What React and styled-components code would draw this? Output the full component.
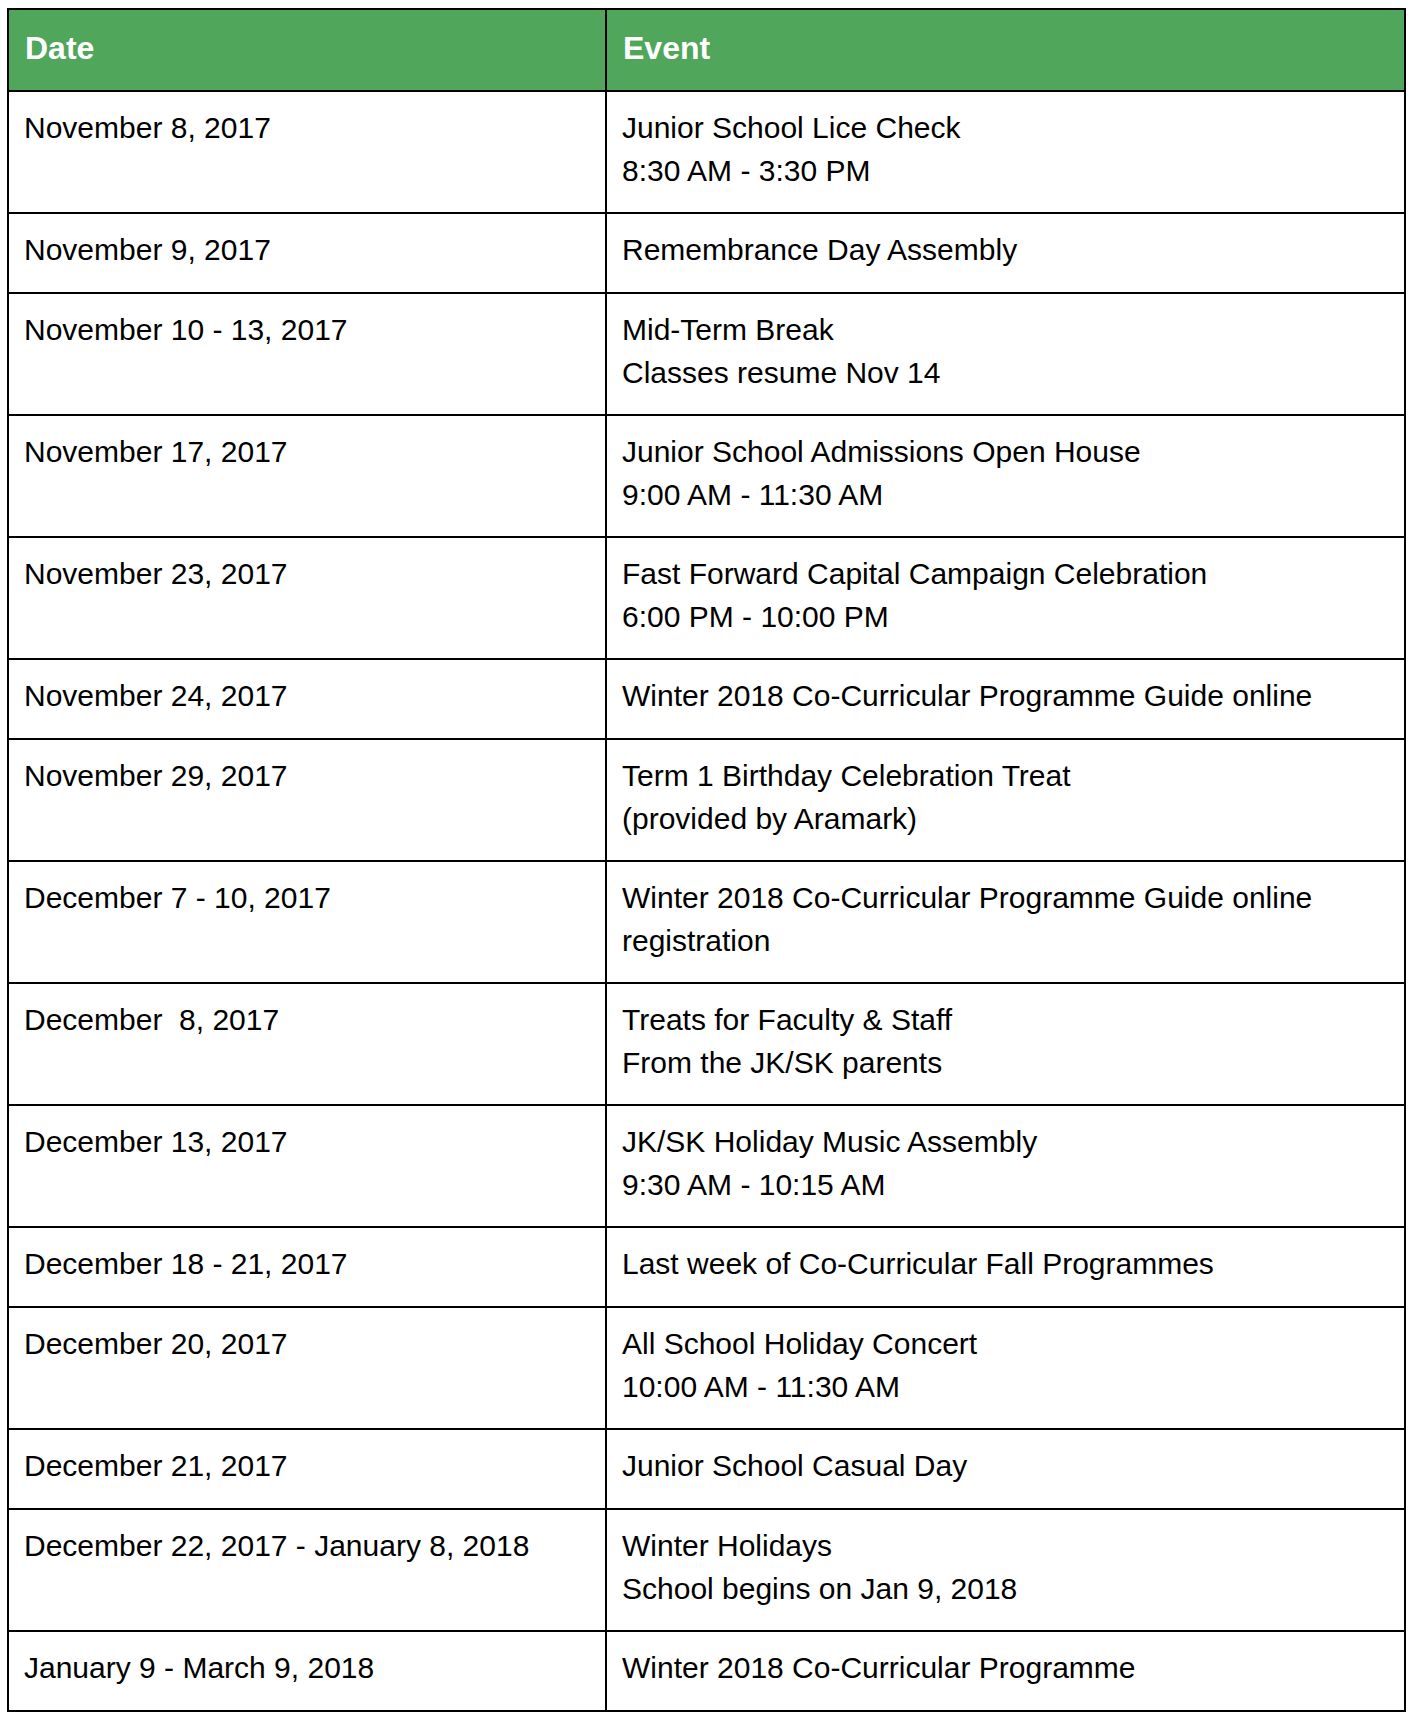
import React from "react";
import styled, { createGlobalStyle } from "styled-components";

const GlobalStyle = createGlobalStyle`
    html, body {
        margin: 0;
        padding: 0;
        background: #ffffff;
    }
    body {
        font-family: "Liberation Sans", Arial, Helvetica, sans-serif;
        color: #000000;
    }
`;

const Page = styled.div`
    padding: 8px 0 0 7px;
`;

const ScheduleTable = styled.table`
    width: 1399px;
    border-collapse: separate;
    border-spacing: 0;
    border-top: 2px solid #000;
    border-left: 2px solid #000;
    table-layout: fixed;
    font-family: "Liberation Sans", Arial, Helvetica, sans-serif;
    color: #000000;
`;

const HeadCell = styled.th`
    width: ${({ $width }) => $width || "auto"};
    background-color: #50a65a;
    color: #ffffff;
    font-family: "Liberation Sans", Arial, Helvetica, sans-serif;
    font-size: 32px;
    font-weight: 700;
    line-height: 44px;
    text-align: left;
    padding: 16px 14px 20px 16px;
    border-right: 2px solid #000;
    border-bottom: 2px solid #000;
`;

// two-line rows sit a little tighter at the bottom than one-line rows
const BodyCell = styled.td`
    vertical-align: top;
    font-family: "Liberation Sans", Arial, Helvetica, sans-serif;
    font-size: 30px;
    line-height: 43px;
    padding: 14px 14px ${({ $multi }) => ($multi ? "20px" : "21px")} 15px;
    border-right: 2px solid #000;
    border-bottom: 2px solid #000;
    white-space: pre-wrap;
`;

const Line = styled.div`
    display: block;
`;

const events = [
    { date: "November 8, 2017", lines: ["Junior School Lice Check", "8:30 AM - 3:30 PM"] },
    { date: "November 9, 2017", lines: ["Remembrance Day Assembly"] },
    { date: "November 10 - 13, 2017", lines: ["Mid-Term Break", "Classes resume Nov 14"] },
    { date: "November 17, 2017", lines: ["Junior School Admissions Open House", "9:00 AM - 11:30 AM"] },
    { date: "November 23, 2017", lines: ["Fast Forward Capital Campaign Celebration", "6:00 PM - 10:00 PM"] },
    { date: "November 24, 2017", lines: ["Winter 2018 Co-Curricular Programme Guide online"] },
    { date: "November 29, 2017", lines: ["Term 1 Birthday Celebration Treat", "(provided by Aramark)"] },
    { date: "December 7 - 10, 2017", lines: ["Winter 2018 Co-Curricular Programme Guide online", "registration"] },
    { date: "December  8, 2017", lines: ["Treats for Faculty & Staff", "From the JK/SK parents"] },
    { date: "December 13, 2017", lines: ["JK/SK Holiday Music Assembly", "9:30 AM - 10:15 AM"] },
    { date: "December 18 - 21, 2017", lines: ["Last week of Co-Curricular Fall Programmes"] },
    { date: "December 20, 2017", lines: ["All School Holiday Concert", "10:00 AM - 11:30 AM"] },
    { date: "December 21, 2017", lines: ["Junior School Casual Day"] },
    { date: "December 22, 2017 - January 8, 2018", lines: ["Winter Holidays", "School begins on Jan 9, 2018"] },
    { date: "January 9 - March 9, 2018", lines: ["Winter 2018 Co-Curricular Programme"] },
];

const App = () => {
    return (
        <Page>
            <GlobalStyle />
            <ScheduleTable>
                <thead>
                    <tr>
                        <HeadCell $width="566px">Date</HeadCell>
                        <HeadCell>Event</HeadCell>
                    </tr>
                </thead>
                <tbody>
                    {events.map((item, index) => {
                        const multi = item.lines.length > 1;
                        return (
                            <tr key={index}>
                                <BodyCell $multi={multi}>{item.date}</BodyCell>
                                <BodyCell $multi={multi}>
                                    {item.lines.map((text, i) => (
                                        <Line key={i}>{text}</Line>
                                    ))}
                                </BodyCell>
                            </tr>
                        );
                    })}
                </tbody>
            </ScheduleTable>
        </Page>
    );
};

export default App;
